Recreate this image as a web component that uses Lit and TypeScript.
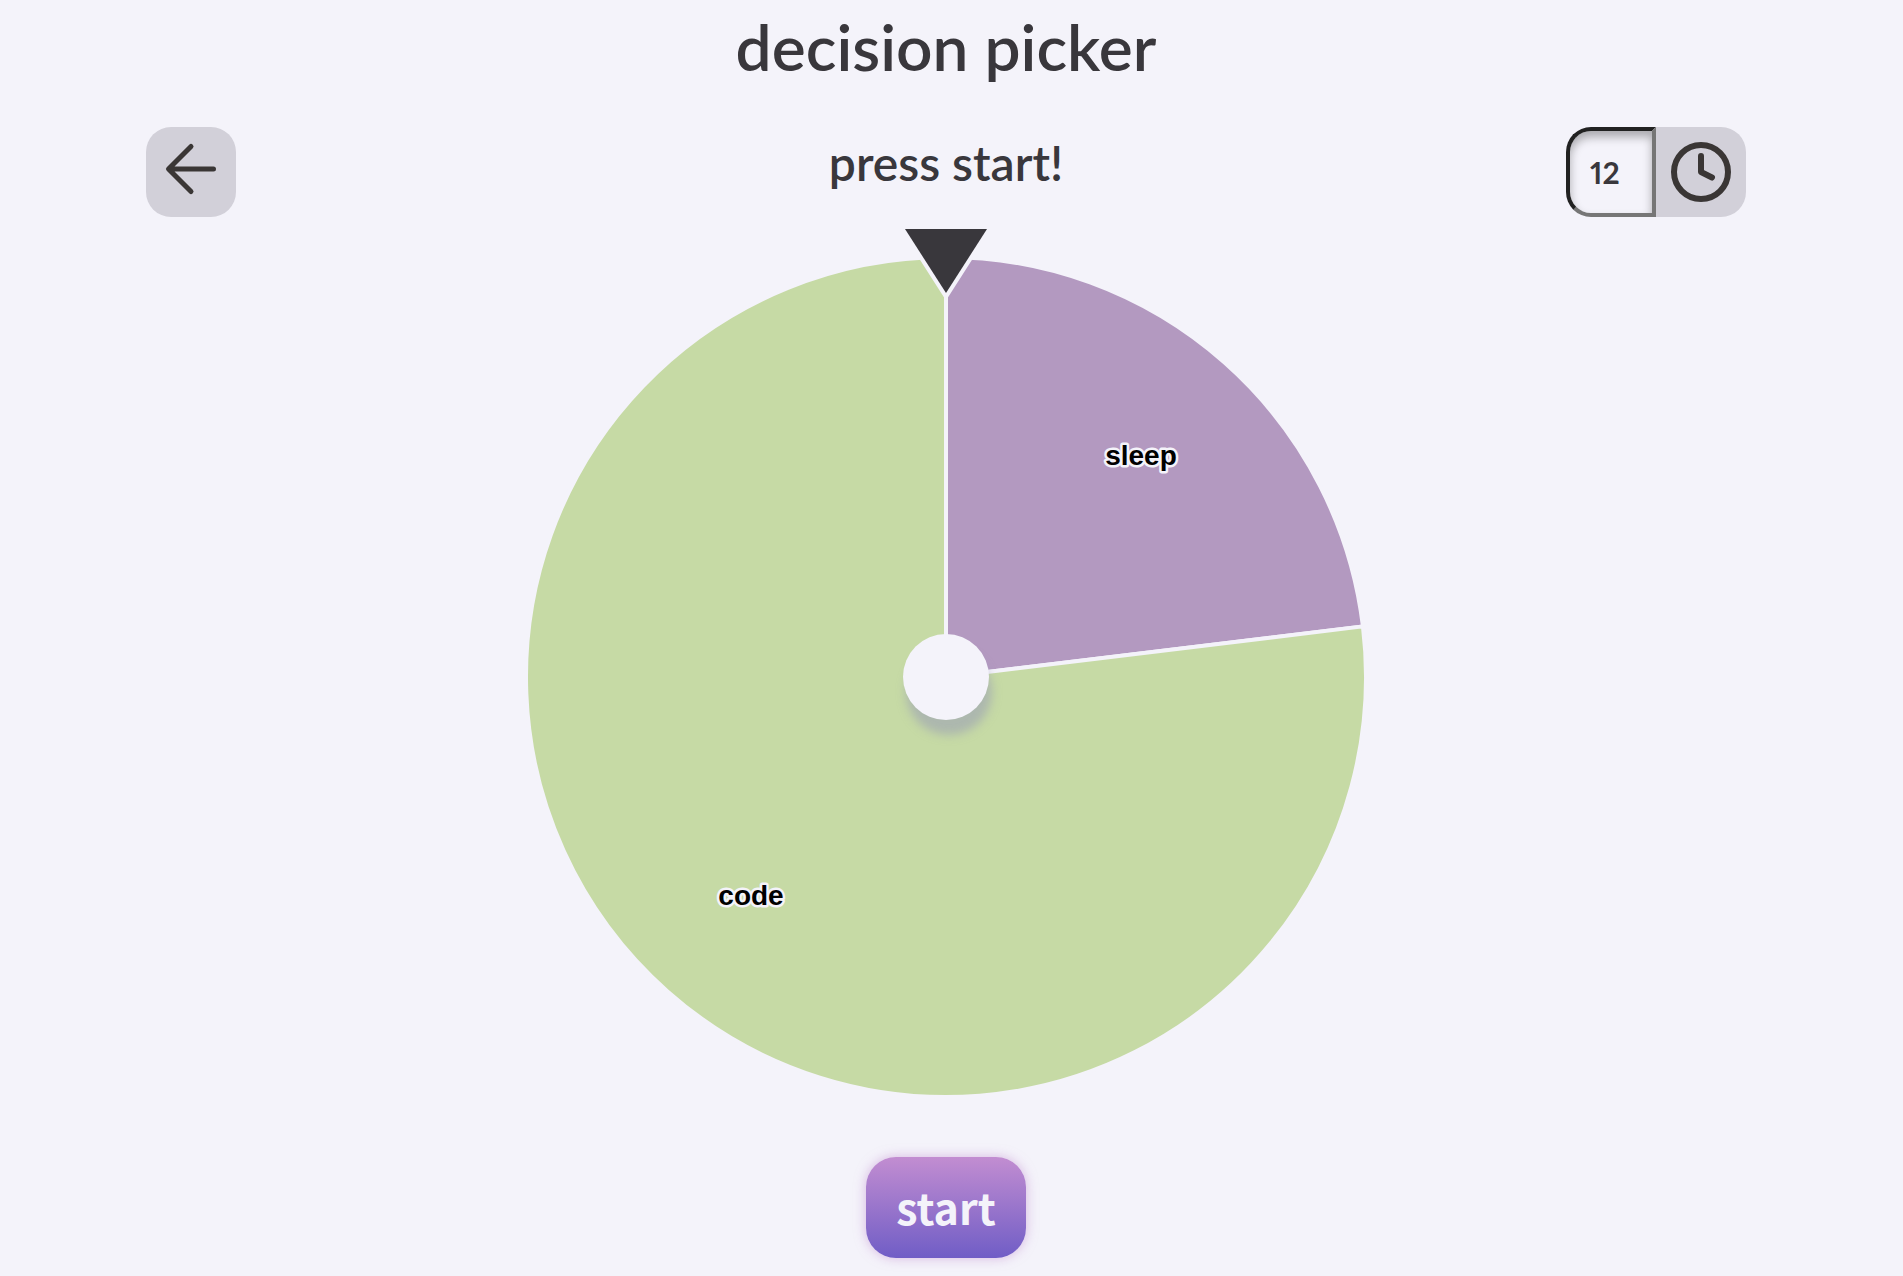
import { LitElement, html, svg, css } from "lit";
import { customElement, state } from "lit/decorators.js";

interface Choice {
  label: string;
  weight: number;
  color: string;
}

const CENTER = 420;
const RADIUS = 420;
const LABEL_RADIUS = 294;

function pointAt(turn: number, radius: number): [number, number] {
  const angle = turn * Math.PI * 2;
  return [CENTER + Math.sin(angle) * radius, CENTER - Math.cos(angle) * radius];
}

@customElement("choice-wheel")
export class ChoiceWheel extends LitElement {
  @state() private choices: Choice[] = [
    { label: "sleep", weight: 3, color: "#b399c0" },
    { label: "code", weight: 10, color: "#c6daa5" },
  ];

  static styles = css`
    :host {
      display: block;
      width: 100%;
      max-width: 840px;
    }
    .wheel {
      display: block;
      width: 100%;
      overflow: visible;
    }
    .slice {
      stroke: #f4f3fa;
      stroke-width: 4;
      stroke-linejoin: round;
    }
    .label {
      font: bold 28px "Liberation Sans", sans-serif;
      fill: #000;
      stroke: #f4f3fa;
      stroke-width: 5;
      stroke-linejoin: round;
      paint-order: stroke;
      text-anchor: middle;
    }
    .hub {
      fill: #f4f3fa;
      filter: drop-shadow(3px 15px 5px rgba(148, 150, 183, 0.5));
    }
    .pointer {
      fill: #39373c;
    }
    .pointer-edge {
      fill: #f4f3fa;
      stroke: #f4f3fa;
      stroke-width: 8;
    }
  `;

  private drawSlices() {
    const total = this.choices.reduce((sum, c) => sum + c.weight, 0);
    let start = 0;
    return this.choices.map((c) => {
      const end = start + c.weight / total;
      const [x1, y1] = pointAt(start, RADIUS);
      const [x2, y2] = pointAt(end, RADIUS);
      const large = end - start > 0.5 ? 1 : 0;
      start = end;
      return svg`<path class="slice" fill=${c.color}
        d="M${CENTER} ${CENTER}L${x1} ${y1}A${RADIUS} ${RADIUS} 0 ${large} 1 ${x2} ${y2}Z"></path>`;
    });
  }

  private drawLabels() {
    const total = this.choices.reduce((sum, c) => sum + c.weight, 0);
    let start = 0;
    return this.choices.map((c) => {
      const middle = start + c.weight / total / 2;
      start += c.weight / total;
      const [x, y] = pointAt(middle, LABEL_RADIUS);
      return svg`<text class="label" x=${Math.round(x)} y=${Math.round(y) + 8}>${c.label}</text>`;
    });
  }

  render() {
    return html`
      <svg class="wheel" viewBox="0 0 840 840" role="img" aria-label="wheel">
        ${this.drawSlices()} ${this.drawLabels()}
        <circle class="hub" cx="420" cy="420" r="43"></circle>
        <path class="pointer-edge" d="M379-28H461L420 36Z"></path>
        <path class="pointer" d="M379-28H461L420 36Z"></path>
      </svg>
    `;
  }
}

@customElement("app-root")
export class AppRoot extends LitElement {
  @state() private seconds = 12;

  static styles = css`
    :host {
      display: block;
      box-sizing: border-box;
      min-height: 100vh;
      padding: 0 11px 16px 0;
      background: #f4f3fa;
      color: #39373c;
      font-family: Lato, "Liberation Sans", sans-serif;
      font-weight: 600;
    }
    .page {
      display: flex;
      flex-direction: column;
      align-items: center;
    }
    .title {
      margin: 0;
      font-size: 64px;
      line-height: 94px;
      font-weight: 600;
    }
    .bar {
      display: grid;
      grid-template-columns: 1fr auto 1fr;
      align-items: start;
      box-sizing: border-box;
      width: 100%;
      max-width: 1600px;
      margin-top: 33px;
    }
    .status {
      margin: 0;
      font-size: 48px;
      line-height: 72px;
    }
    .tile {
      display: flex;
      align-items: center;
      justify-content: center;
      width: 90px;
      height: 90px;
      padding: 0;
      border: 0;
      border-radius: 25px;
      background: #d2d0d9;
      color: #3a3635;
      cursor: pointer;
    }
    .timer {
      display: flex;
      justify-self: end;
    }
    .seconds {
      box-sizing: border-box;
      width: 90px;
      height: 90px;
      padding: 0 0 0 20px;
      border: 4px solid;
      border-color: #212121 #767676 #767676 #212121;
      border-radius: 25px 0 0 25px;
      background: #f4f3fa;
      box-shadow: inset 0 6px 10px rgba(0, 0, 0, 0.3);
      color: #39373c;
      font: 700 30px Lato, sans-serif;
      font-variant-numeric: proportional-nums;
      appearance: textfield;
      -moz-appearance: textfield;
    }
    .seconds::-webkit-inner-spin-button {
      appearance: none;
      margin: 0;
    }
    .clock {
      border-radius: 0 25px 25px 0;
    }
    .icon {
      display: block;
      fill: none;
      stroke: currentColor;
      stroke-linecap: round;
      stroke-linejoin: round;
    }
    choice-wheel {
      margin-top: 40px;
    }
    .start {
      width: 160px;
      height: 101px;
      margin-top: 60px;
      padding: 0;
      border: 0;
      border-radius: 30px;
      background: linear-gradient(#c28dd1, #705dc6);
      box-shadow: 0 0 12px rgba(194, 141, 209, 0.6);
      color: #f4f3fa;
      font: 700 43px "Noto Sans CJK JP", sans-serif;
      line-height: 96px;
      padding-bottom: 4px;
      cursor: pointer;
    }
  `;

  private setSeconds(e: Event) {
    this.seconds = Number((e.target as HTMLInputElement).value);
  }

  render() {
    return html`
      <main class="page">
        <h1 class="title">decision picker</h1>
        <div class="bar">
          <button class="tile" aria-label="back">
            <svg class="icon" width="90" height="90" viewBox="0 0 90 90" stroke-width="5">
              <path d="M67.500 42H23M45 19.500L22.500 42L45 64.500"></path>
            </svg>
          </button>
          <p class="status">press start!</p>
          <div class="timer">
            <input
              class="seconds"
              type="number"
              aria-label="seconds"
              .value=${String(this.seconds)}
              @input=${this.setSeconds}
            />
            <button class="tile clock" aria-label="timer">
              <svg class="icon" width="90" height="90" viewBox="0 0 90 90" stroke-width="6">
                <circle cx="45" cy="45" r="27"></circle>
                <path d="M45 29V45L56 50.500"></path>
              </svg>
            </button>
          </div>
        </div>
        <choice-wheel></choice-wheel>
        <button class="start">start</button>
      </main>
    `;
  }
}
